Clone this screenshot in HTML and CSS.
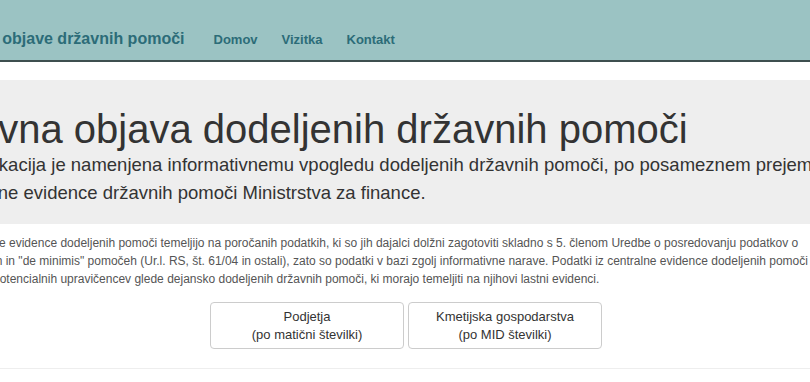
FILE: index.html
```html
<!DOCTYPE html>
<html lang="sl">
<head>
    <meta charset="UTF-8">
    <meta name="viewport" content="width=device-width, initial-scale=1.0">
    <title>Javna objava dodeljenih državnih pomoči</title>
    <link rel="stylesheet" href="styles.css">
</head>
<body>

<div class="page">
    <!-- Glavni meni -->
    <div class="navbar">
        <div class="container nav-inner">
            <a class="brand" href="#">Spletne objave državnih pomoči</a>
            <ul class="nav">
                <li><a href="#">Domov</a></li>
                <li><a href="#">Vizitka</a></li>
                <li><a href="#">Kontakt</a></li>
            </ul>
        </div>
    </div>

    <!-- Naslov -->
    <div class="jumbotron">
        <div class="container">
            <h1>Javna objava dodeljenih državnih pomoči</h1>
            <p class="lead">Aplikacija je namenjena informativnemu vpogledu dodeljenih državnih pomoči, po posameznem prejemniku, iz<br>zbirne evidence državnih pomoči Ministrstva za finance.</p>
        </div>
    </div>

    <div class="container">
        <p class="note">Osrednje evidence dodeljenih pomoči temeljijo na poročanih podatkih, ki so jih dajalci dolžni zagotoviti skladno s 5. členom Uredbe o posredovanju podatkov o<br>državnih in "de minimis" pomočeh (Ur.l. RS, št. 61/04 in ostali), zato so podatki v bazi zgolj informativne narave. Podatki iz centralne evidence dodeljenih pomoči ne morejo nadomestiti<br>trditev potencialnih upravičencev glede dejansko dodeljenih državnih pomoči, ki morajo temeljiti na njihovi lastni evidenci.</p>

        <!-- Izbira iskanja -->
        <div class="choices">
            <a class="btn" href="#">Podjetja<br>(po matični številki)</a>
            <a class="btn" href="#">Kmetijska gospodarstva<br>(po MID številki)</a>
        </div>

        <hr>
    </div>
</div>

</body>
</html>
```

FILE: styles.css
```css
html, body {
    margin: 0;
    padding: 0;
}
body {
    font-family: "Liberation Sans", Arial, sans-serif;
    color: #333;
    background-color: #fff;
}
.page {
    overflow: hidden;
}
.container {
    width: 890px;
    margin-left: -55px;
    padding: 0 15px;
}
.navbar {
    background-color: #9bc3c3;
    border-bottom: 2px solid #3d4f4f;
}
.nav-inner {
    box-sizing: border-box;
    display: flex;
    align-items: center;
    width: 920px;
    height: 60px;
    padding: 18px 0 0;
}
.brand {
    margin-left: -5px;
    color: #2c6c78;
    font-size: 16px;
    font-weight: bold;
    text-decoration: none;
}
.nav {
    display: flex;
    list-style: none;
    margin: 0 0 0 17px;
    padding: 0;
}
.nav a {
    display: block;
    padding: 0 12px;
    color: #2c6c78;
    font-size: 13px;
    font-weight: bold;
    text-decoration: none;
}
.jumbotron {
    margin-top: 18px;
    padding: 27px 0 17px;
    background-color: #eeeeee;
}
.jumbotron .container {
    padding-left: 11px;
    padding-right: 19px;
}
.jumbotron h1 {
    margin: 0;
    font-size: 40px;
    font-weight: normal;
    line-height: 1.1;
    white-space: nowrap;
}
.lead {
    margin: 0 0 0 12px;
    font-size: 18.5px;
    line-height: 28px;
    white-space: nowrap;
}
.note {
    margin: 10px 0 14px -3px;
    font-size: 12px;
    line-height: 18px;
    color: #555;
    white-space: nowrap;
}
.choices {
    display: flex;
    justify-content: center;
    gap: 4px;
    padding-left: 2px;
}
.btn {
    display: block;
    width: 170px;
    padding: 5px 11px 4px;
    border: 1px solid #ccc;
    border-radius: 4px;
    color: #333;
    font-size: 13px;
    line-height: 18px;
    text-align: center;
    text-decoration: none;
}
hr {
    margin: 19px 0 0;
    border: 0;
    border-top: 1px solid #eee;
}
```
